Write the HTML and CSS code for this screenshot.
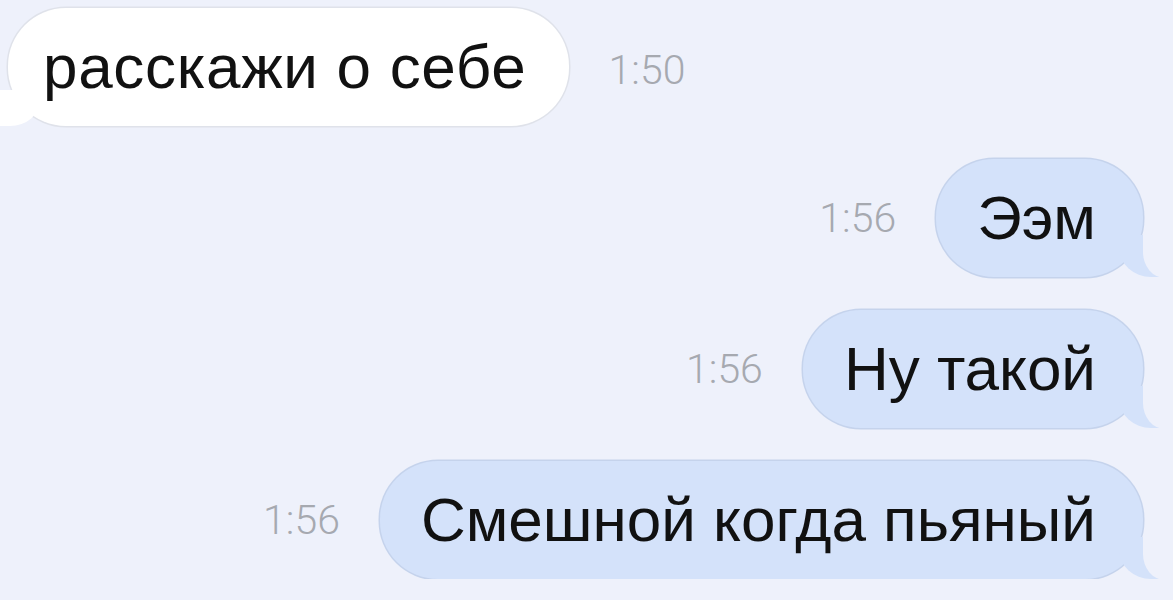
FILE: index.html
```html
<!DOCTYPE html>
<html lang="ru">
<head>
    <meta charset="UTF-8">
    <meta name="viewport" content="width=device-width, initial-scale=1.0">
    <title>Сообщения</title>
    <link rel="stylesheet" href="styles.css">
</head>
<body>
    <div class="chat">
        <div class="row in">
            <div class="bubble">расскажи о себе</div>
            <span class="time">1:50</span>
        </div>
        <div class="row out">
            <span class="time">1:56</span>
            <div class="bubble">Ээм</div>
        </div>
        <div class="row out">
            <span class="time">1:56</span>
            <div class="bubble">Ну такой</div>
        </div>
        <div class="row out">
            <span class="time">1:56</span>
            <div class="bubble">Смешной когда пьяный</div>
        </div>
    </div>
</body>
</html>
```

FILE: styles.css
```css
body {
    margin: 0;
    background-color: #eef1fb;
    font-family: 'Liberation Sans', Arial, sans-serif;
    overflow: hidden;
}
.chat {
    display: flex;
    flex-direction: column;
    gap: 33px;
    padding: 8px 30px 0 8px;
}
.row {
    display: flex;
    align-items: center;
    gap: 40px;
}
.row.out {
    justify-content: flex-end;
}
.bubble {
    position: relative;
    box-sizing: border-box;
    height: 118px;
    display: flex;
    align-items: center;
    padding: 0 47px 2px 41px;
    border-radius: 58px;
    font-size: 62px;
    color: #111111;
    white-space: nowrap;
}
.in .bubble {
    background-color: #ffffff;
    box-shadow: 0 0 0 1.5px #dfe2ea;
    padding: 0 42px 2px 35px;
    letter-spacing: 0.7px;
}
.out .bubble {
    background-color: #d4e2fa;
    box-shadow: 0 0 0 1.5px #c5d3ec;
}
.time {
    font-family: Roboto, 'Liberation Sans', sans-serif;
    font-weight: 300;
    font-size: 41px;
    color: #a6a9b0;
}
.in .time {
    margin-top: 6px;
}

/* tails */
.out .bubble::before {
    content: "";
    position: absolute;
    bottom: 0;
    right: -22px;
    width: 46px;
    height: 42px;
    background-color: #d4e2fa;
    border-bottom-left-radius: 32px 30px;
}
.out .bubble::after {
    content: "";
    position: absolute;
    bottom: -1px;
    right: -34px;
    width: 34px;
    height: 46px;
    background-color: #eef1fb;
    border-bottom-left-radius: 22px 26px;
}
.in .bubble::before {
    content: "";
    position: absolute;
    bottom: 0;
    left: -8px;
    width: 40px;
    height: 36px;
    background-color: #ffffff;
    border-bottom-right-radius: 30px 26px;
}
.in .bubble::after {
    content: "";
    position: absolute;
    bottom: -1px;
    left: -34px;
    width: 26px;
    height: 40px;
    background-color: #eef1fb;
    border-bottom-right-radius: 18px 22px;
}
```
